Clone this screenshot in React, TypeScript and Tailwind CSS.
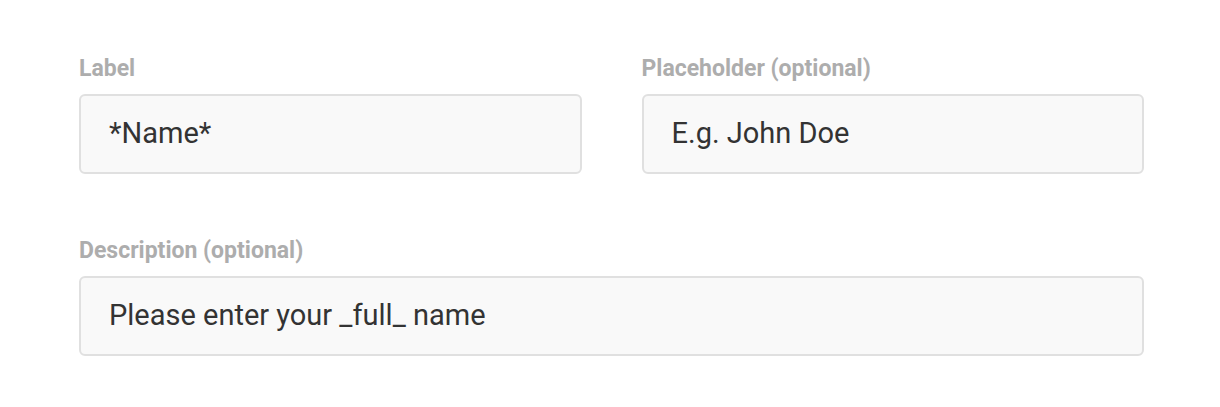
import React from "react";

function Field({ label, value }: { label: string; value: string }) {
  return (
    <div className="flex flex-col">
      <label className="text-[23px] leading-[26px] font-bold text-[#adadad] mb-[12px]">{label}</label>
      <div className="h-[80px] rounded-[6px] border-2 border-[#e0e0e0] bg-[#f9f9f9] flex items-center pl-[28px] text-[29px] text-[#333333]">
        {value}
      </div>
    </div>
  );
}

export default function App() {
  return (
    <div className="min-h-[407px] bg-white pl-[79px] pr-[76px] pt-[56px]" style={{ fontFamily: "Roboto, 'Noto Sans', sans-serif" }}>
      <div className="grid grid-cols-2 gap-x-[60px]">
        <Field label="Label" value="*Name*" />
        <Field label="Placeholder (optional)" value="E.g. John Doe" />
      </div>
      <div className="mt-[64px]">
        <Field label="Description (optional)" value="Please enter your _full_ name" />
      </div>
    </div>
  );
}
